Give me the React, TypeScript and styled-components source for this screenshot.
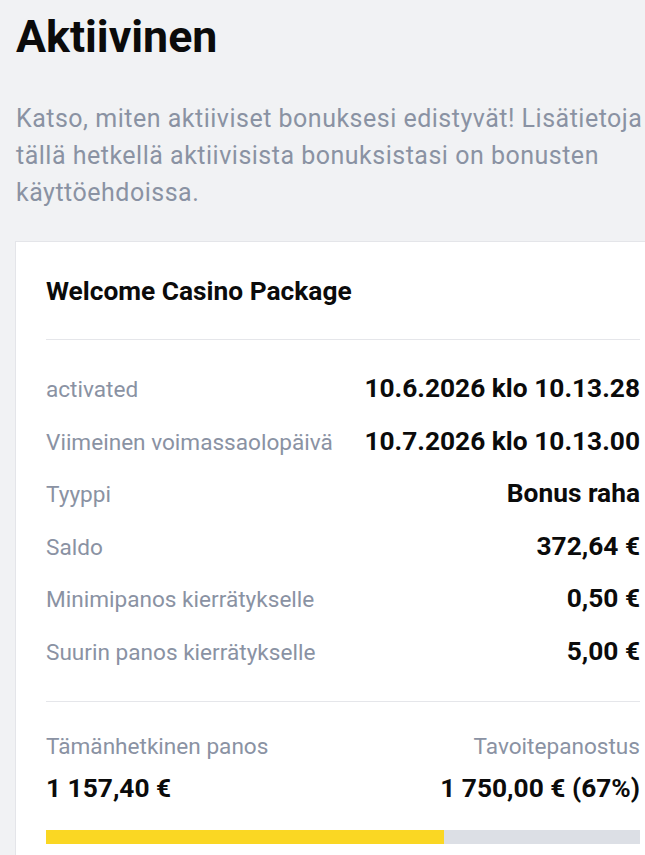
import React from "react";
import styled, { createGlobalStyle } from "styled-components";

const GlobalStyle = createGlobalStyle`
  html, body {
    margin: 0;
    padding: 0;
    background: #f1f2f4;
    font-family: Roboto, "Noto Sans", "Liberation Sans", sans-serif;
    -webkit-font-smoothing: antialiased;
  }
  body { overflow: hidden; }
  * { box-sizing: border-box; }
`;

const Page = styled.div`
  width: 645px;
  overflow: hidden;
  padding: 9px 0 40px 16px;
`;

const Title = styled.h1`
  margin: 0;
  font-size: 44.7px;
  line-height: 56px;
  font-weight: 700;
  color: #0b0b0b;
`;

const Intro = styled.p`
  margin: 34.5px 0 0 0;
  width: 629px;
  font-size: 25px;
  line-height: 37px;
  letter-spacing: 0.5px;
  font-weight: 400;
  color: #8a92a3;
`;

const Card = styled.section`
  margin: 30.5px 0 0 -1px;
  width: 656px;
  background: #ffffff;
  border: 1px solid #e4e5e9;
  padding: 0 30px 30px 30px;
`;

const CardHeader = styled.div`
  padding: 33.5px 0 33.5px 0;
  border-bottom: 1px solid #e5e6ea;
`;

const CardTitle = styled.h2`
  margin: 0;
  font-size: 26.3px;
  line-height: 30px;
  font-weight: 700;
  color: #0b0b0b;
`;

const Details = styled.div`
  padding: 33.3px 0 12.7px 0;
  border-bottom: 1px solid #e5e6ea;
`;

const Row = styled.div`
  display: flex;
  justify-content: space-between;
  align-items: baseline;
  height: 52.5px;
`;

const Label = styled.span<{ $align?: "left" | "right" }>`
  font-size: 22.6px;
  line-height: 30px;
  font-weight: 400;
  color: #8a92a3;
  white-space: nowrap;
  text-align: ${(p) => p.$align ?? "left"};
`;

const Value = styled.span<{ $align?: "left" | "right" }>`
  font-size: 26.3px;
  line-height: 30px;
  font-weight: 700;
  color: #0b0b0b;
  white-space: nowrap;
  text-align: ${(p) => p.$align ?? "right"};
`;

const Progress = styled.div`
  padding-top: 30px;
`;

const ProgressLine = styled.div<{ $gap?: number }>`
  display: flex;
  justify-content: space-between;
  align-items: baseline;
  margin-top: ${(p) => p.$gap ?? 0}px;
`;

const Track = styled.div`
  margin-top: 26.7px;
  height: 14px;
  background: #dcdfe5;
  overflow: hidden;
`;

const Fill = styled.div`
  height: 100%;
  background: #fad723;
`;

const rows: [string, string][] = [
  ["activated", "10.6.2026 klo 10.13.28"],
  ["Viimeinen voimassaolopäivä", "10.7.2026 klo 10.13.00"],
  ["Tyyppi", "Bonus raha"],
  ["Saldo", "372,64 €"],
  ["Minimipanos kierrätykselle", "0,50 €"],
  ["Suurin panos kierrätykselle", "5,00 €"],
];

export default function App() {
  const pct = 67;
  return (
    <>
      <GlobalStyle />
      <Page>
        <Title>Aktiivinen</Title>
        <Intro>
          Katso, miten aktiiviset bonuksesi edistyvät! Lisätietoja tällä
          hetkellä aktiivisista bonuksistasi on bonusten käyttöehdoissa.
        </Intro>
        <Card>
          <CardHeader>
            <CardTitle>Welcome Casino Package</CardTitle>
          </CardHeader>
          <Details>
            {rows.map(([l, v]) => (
              <Row key={l}>
                <Label>{l}</Label>
                <Value>{v}</Value>
              </Row>
            ))}
          </Details>
          <Progress>
            <ProgressLine>
              <Label>Tämänhetkinen panos</Label>
              <Label $align="right">Tavoitepanostus</Label>
            </ProgressLine>
            <ProgressLine $gap={11.2}>
              <Value $align="left">1 157,40 €</Value>
              <Value>1 750,00 € ({pct}%)</Value>
            </ProgressLine>
            <Track>
              <Fill style={{ width: `${pct}%` }} />
            </Track>
          </Progress>
        </Card>
      </Page>
    </>
  );
}
